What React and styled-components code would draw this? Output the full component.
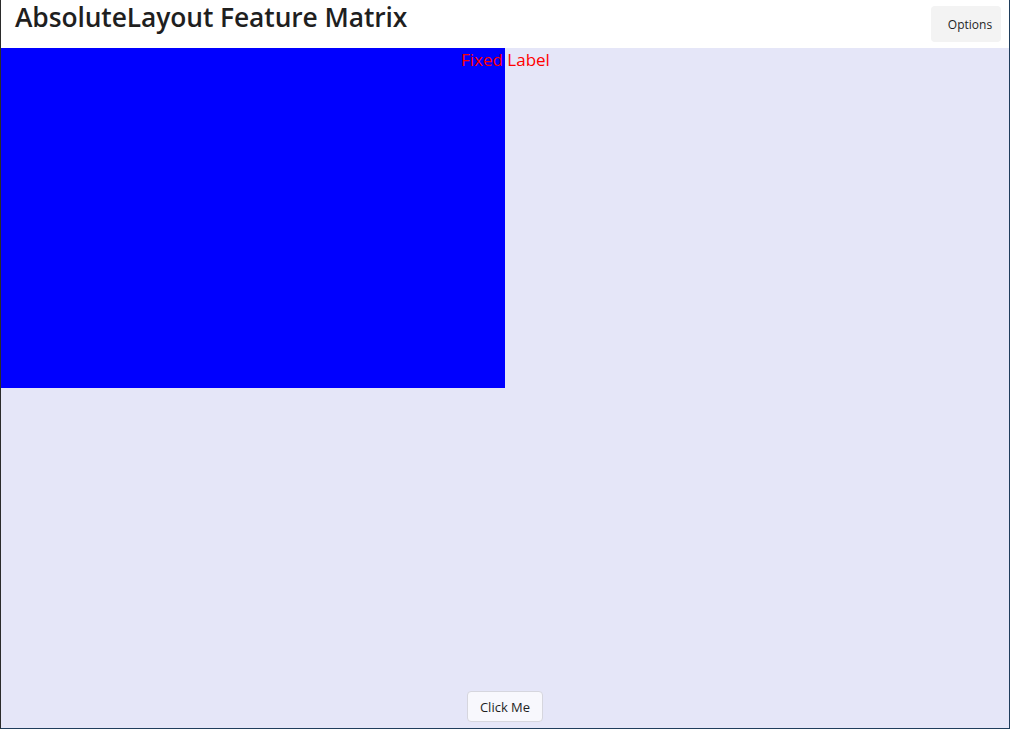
import React from 'react';
import styled, { createGlobalStyle } from 'styled-components';

const Global = createGlobalStyle`
  html, body {
    margin: 0;
    padding: 0;
    height: 100%;
  }
  body {
    font-family: 'Open Sans', 'Noto Sans', sans-serif;
    background: #ffffff;
  }
  #root {
    height: 100%;
  }
`;

const Window = styled.div`
  box-sizing: border-box;
  width: 1010px;
  height: 729px;
  display: flex;
  flex-direction: column;
  border-left: 1px solid #2b2b2b;
  border-right: 1px solid #1f3d5c;
  border-bottom: 1px solid #1f3d5c;
  overflow: hidden;
`;

const TitleBar = styled.header`
  height: 48px;
  flex: none;
  display: flex;
  align-items: flex-start;
  justify-content: space-between;
  background: #ffffff;
  padding: 0 8px 0 14px;
`;

const Title = styled.h1`
  margin: 0;
  font-family: 'Open Sans', sans-serif;
  font-weight: 600;
  font-size: 26.4px;
  line-height: 34px;
  color: #1f1f1f;
  letter-spacing: -0.1px;
`;

const OptionsButton = styled.button`
  margin-top: 6px;
  width: 70px;
  height: 36px;
  border: none;
  border-radius: 4px;
  background: #f3f3f3;
  font-family: 'Open Sans', sans-serif;
  font-size: 12px;
  color: #1f1f1f;
  padding: 0 0 0 8px;
`;

const Canvas = styled.main`
  position: relative;
  flex: 1;
  background: #e5e6f8;
  display: flex;
  flex-direction: column;
  justify-content: flex-end;
  align-items: center;
  padding-bottom: 6px;
`;

const Box = styled.div`
  position: absolute;
  left: ${(p) => p.x}px;
  top: ${(p) => p.y}px;
  width: ${(p) => p.w}px;
  height: ${(p) => p.h}px;
  background: ${(p) => p.color};
`;

const Label = styled.span`
  position: absolute;
  left: ${(p) => p.x}px;
  top: ${(p) => p.y}px;
  font-family: 'Open Sans', sans-serif;
  font-size: 17px;
  line-height: 24px;
  color: #ff0000;
`;

const ActionButton = styled.button`
  width: 76px;
  height: 31px;
  border: 1px solid #d6d6de;
  border-radius: 4px;
  background: #f8f8fd;
  font-family: 'Open Sans', sans-serif;
  font-size: 13px;
  color: #1f1f1f;
  padding: 0;
`;

export default function App() {
  return (
    <>
      <Global />
      <Window>
        <TitleBar>
          <Title>AbsoluteLayout Feature Matrix</Title>
          <OptionsButton>Options</OptionsButton>
        </TitleBar>
        <Canvas>
          <Box x={0} y={0} w={504} h={340} color="#0000ff" />
          <Label x={460} y={0}>Fixed Label</Label>
          <ActionButton>Click Me</ActionButton>
        </Canvas>
      </Window>
    </>
  );
}
